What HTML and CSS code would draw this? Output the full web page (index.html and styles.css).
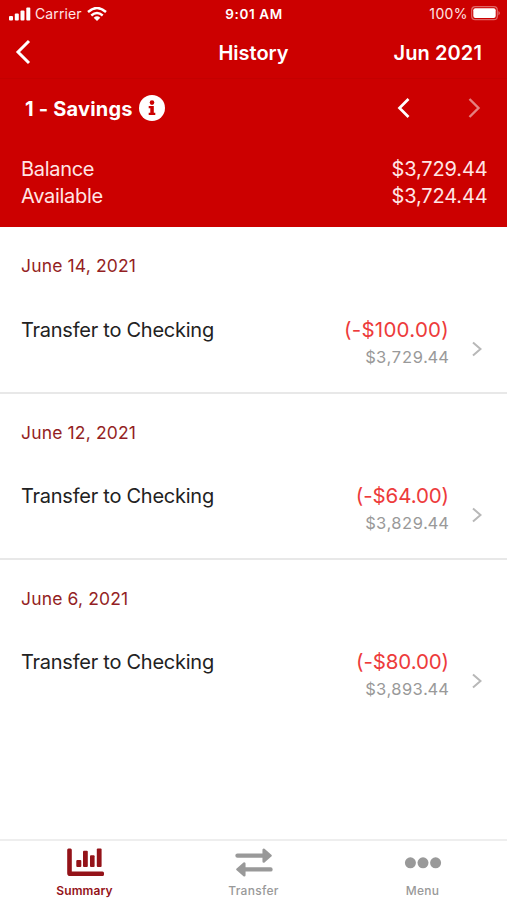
FILE: index.html
```html
<!DOCTYPE html>
<html lang="en">
<head>
<meta charset="utf-8">
<title>History</title>
<link rel="stylesheet" href="styles.css">
</head>
<body>
<div class="app">
  <header class="header">
    <div class="status">
      <div class="carrier">
        <svg width="22" height="14" viewBox="0 0 22 14" fill="#fff"><rect x="0" y="9" width="4" height="4.500" rx="1"/><rect x="5.800" y="6.500" width="4" height="7" rx="1"/><rect x="11.500" y="3.500" width="4" height="10" rx="1"/><rect x="17.300" y="0.500" width="4" height="13" rx="1"/></svg>
        <span class="carrier-name">Carrier</span>
        <svg class="wifi" width="20" height="14" viewBox="0 0 20 14" fill="none" stroke="#fff" stroke-width="2.400"><path d="M1 5Q10-3 19 5M4.300 8.500Q10 3.500 15.700 8.500"/><path d="M6.700 10.700Q10 7.900 13.300 10.700L10 14Z" fill="#fff" stroke="none"/></svg>
      </div>
      <span class="clock">9:01 AM</span>
      <div class="power">
        <span class="percent">100%</span>
        <svg width="30" height="15" viewBox="0 0 30 15"><rect x="0.700" y="0.700" width="25.600" height="13" rx="3.500" fill="none" stroke="#fff" stroke-opacity=".4" stroke-width="1.200"/><rect x="2.300" y="2.300" width="22.400" height="9.800" rx="2" fill="#fff"/><path d="M27.500 5Q30 7.200 27.500 9.500Z" fill="#fff" opacity=".5"/></svg>
      </div>
    </div>
    <nav class="nav">
      <svg class="back" width="16" height="26" viewBox="0 0 16 26" fill="none" stroke="#fff" stroke-width="3"><path d="M14 2L3 13L14 24"/></svg>
      <h1 class="title">History</h1>
      <span class="month">Jun 2021</span>
    </nav>
    <div class="account">
      <span class="account-name">1 - Savings</span>
      <svg class="info" width="26" height="26" viewBox="0 0 26 26"><circle cx="13" cy="13" r="13" fill="#fff"/><circle cx="13" cy="7.600" r="2.300" fill="#c00"/><path d="M9.700 11H14.800V17.800H16.300V20H9.700V17.800H11.300V13.200H9.700Z" fill="#c00"/></svg>
      <div class="pager">
        <svg width="13" height="20" viewBox="0 0 13 20" fill="none" stroke="#fff" stroke-width="2.700"><path d="M11.500 1L2.500 10L11.500 19"/></svg>
        <svg width="13" height="20" viewBox="0 0 13 20" fill="none" stroke="#fff" stroke-width="2.400" opacity=".5"><path d="M1.500 1L10.500 10L1.500 19"/></svg>
      </div>
    </div>
    <div class="totals">
      <div class="total"><span>Balance</span><span class="sum">$3,729.44</span></div>
      <div class="total"><span>Available</span><span class="sum">$3,724.44</span></div>
    </div>
  </header>
  <main class="list">
    <section class="entry">
      <div class="date">June 14, 2021</div>
      <div class="row"><span class="desc">Transfer to Checking</span><div class="amounts"><div class="amount hundreds">(-$100.00)</div><div class="after">$3,729.44</div></div>
      <svg class="go" width="10" height="16" viewBox="0 0 10 16"><path d="M1 1.500L8.500 8L1 14.500"/></svg></div>
    </section>
    <section class="entry">
      <div class="date">June 12, 2021</div>
      <div class="row"><span class="desc">Transfer to Checking</span><div class="amounts"><div class="amount">(-$64.00)</div><div class="after">$3,829.44</div></div>
      <svg class="go" width="10" height="16" viewBox="0 0 10 16"><path d="M1 1.500L8.500 8L1 14.500"/></svg></div>
    </section>
    <section class="entry">
      <div class="date">June 6, 2021</div>
      <div class="row"><span class="desc">Transfer to Checking</span><div class="amounts"><div class="amount">(-$80.00)</div><div class="after">$3,893.44</div></div>
      <svg class="go" width="10" height="16" viewBox="0 0 10 16"><path d="M1 1.500L8.500 8L1 14.500"/></svg></div>
    </section>
  </main>
  <footer class="tabs">
    <div class="tab active">
      <svg width="38" height="30" viewBox="0 0 38 30" fill="currentColor"><path d="M2.500 .5H4.500Q5.800 .5 5.800 2V23.500H36.500Q38 23.500 38 25V26.500Q38 28 36.500 28H4Q1.200 28 1.200 25.200V2Q1.200 .5 2.500 .5Z"/><rect x="10.300" y="12" width="5" height="7" rx="1"/><rect x="17" y="2.800" width="4.800" height="16.200" rx="1"/><rect x="24" y="7.300" width="4.600" height="11.700" rx="1"/><rect x="30.800" y="0.500" width="4.800" height="18.500" rx="1"/></svg>
      <span>Summary</span>
    </div>
    <div class="tab">
      <svg width="38" height="30" viewBox="0 0 38 30" fill="currentColor" stroke="currentColor" stroke-linejoin="round" stroke-linecap="round"><path d="M2.500 7.600H28M35.500 21.400H10" stroke-width="4.400"/><path d="M28.700 1.700V13.500L35.500 7.600ZM9.300 15.500V27.300L2.500 21.400Z" stroke-width="2.500"/></svg>
      <span>Transfer</span>
    </div>
    <div class="tab">
      <svg width="38" height="30" viewBox="0 0 38 30" fill="currentColor"><circle cx="6.400" cy="14.800" r="5.500"/><circle cx="19" cy="14.800" r="5.500"/><circle cx="31.600" cy="14.800" r="5.500"/></svg>
      <span>Menu</span>
    </div>
  </footer>
</div>
</body>
</html>
```
FILE: styles.css
```css
* { box-sizing: border-box; }
body { margin: 0; font-family: Inter, "Liberation Sans", sans-serif; background: #fff; }
svg { display: block; flex: none; }
.app { width: 507px; height: 900px; display: flex; flex-direction: column; overflow: hidden; white-space: nowrap; }
.header { height: 226.5px; flex: none; background: #c00; color: #fff; }
.status { height: 27px; padding: 0 8px 0 9px; display: grid; grid-template-columns: 1fr auto 1fr; align-items: center; font-size: 14px; }
.carrier { display: flex; align-items: center; }
.carrier-name { margin-left: 4px; color: #ffe5e5; letter-spacing: .1px; }
.wifi { margin-left: 5px; }
.clock { font-weight: 600; font-size: 13.5px; letter-spacing: .6px; }
.power { display: flex; align-items: center; justify-content: flex-end; gap: 3px; margin-right: -2px; }
.percent { color: #ffe5e5; letter-spacing: .4px; }
.nav { height: 52px; padding: 0 25px 0 15px; display: grid; grid-template-columns: 1fr auto 1fr; align-items: center; border-bottom: 1px solid #c40000; }
.back { margin-bottom: 2px; }
.title, .month { margin: 0; font-size: 20px; line-height: 24px; font-weight: 600; }
.title { padding-left: 10px; }
.month { text-align: right; letter-spacing: .1px; }
.account { height: 59px; padding: 0 26px 0 25px; display: flex; align-items: center; }
.account-name { font-size: 20px; font-weight: 700; letter-spacing: .2px; }
.info { margin: 0 0 1px 6px; }
.pager { margin: 0 0 1px auto; display: flex; gap: 58px; }
.totals { padding: 17px 19.5px 0 21px; }
.total { height: 27.3px; display: flex; justify-content: space-between; align-items: center; font-size: 20px; color: #ffe5e5; letter-spacing: -.3px; }
.sum { letter-spacing: -.15px; }
.list { flex: 1; }
.entry { height: 166px; padding: 27px 24px 0 21px; border-bottom: 2px solid #e8e8e8; }
.entry:first-child { height: 167.5px; padding-top: 27.5px; }
.entry:last-child { border-bottom: 0; }
.date { font-size: 17.5px; line-height: 24px; color: #941f24; letter-spacing: .15px; }
.row { margin-top: 37px; display: flex; align-items: flex-start; }
.entry:first-child .row { margin-top: 38px; }
.desc { font-size: 20px; line-height: 29px; color: #222; letter-spacing: -.25px; }
.amounts { margin-left: auto; text-align: right; }
.amount { font-size: 20.5px; line-height: 28px; color: #ed3b3b; letter-spacing: -.1px; }
.hundreds { letter-spacing: .25px; }
.after { font-size: 16.5px; line-height: 26px; color: #999; font-variant-numeric: tabular-nums; }
.go { margin: 25px 1px 0 23px; fill: none; stroke: #b8b8b8; stroke-width: 2; }
.tabs { height: 61px; flex: none; border-top: 2px solid #eee; display: grid; grid-template-columns: repeat(3, 1fr); font-size: 12px; font-weight: 500; color: #999; }
.tab { display: flex; flex-direction: column; align-items: center; padding-top: 7px; }
.tab span { line-height: 16px; margin-top: 5px; letter-spacing: .3px; }
.active { color: #941319; }
.active span { font-weight: 600; letter-spacing: .1px; }
```
